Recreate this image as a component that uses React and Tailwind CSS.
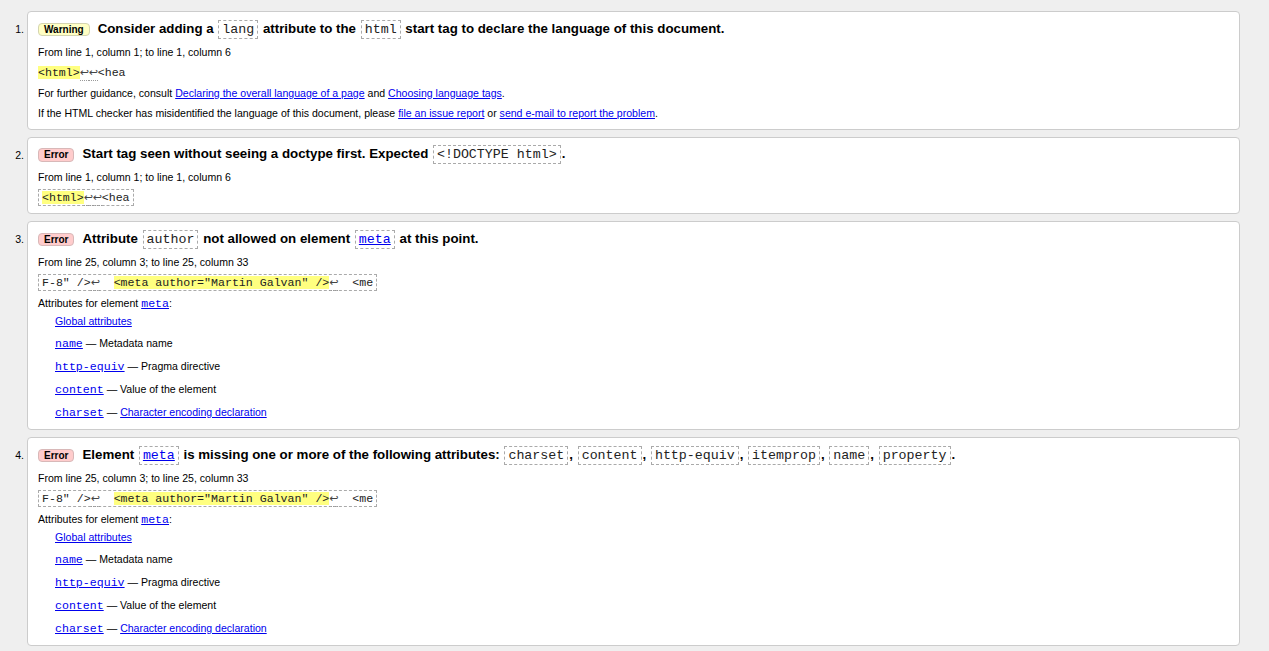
import React from "react";

function Badge({ kind }) {
  if (kind === "warning") {
    return (
      <span className="inline-block shrink-0 mr-[8px] mt-[1px] px-[5px] border border-[#d4d4b0] rounded-[4px] bg-[#ffffc4] text-[10px] font-bold leading-[11.5px] text-black">
        Warning
      </span>
    );
  }
  return (
    <span className="inline-block shrink-0 mr-[8px] mt-[1px] px-[5px] border border-[#d8b8b8] rounded-[4px] bg-[#ffcccc] text-[10px] font-bold leading-[11.5px] text-black">
      Error
    </span>
  );
}

function TC({ children }) {
  return (
    <code className="font-['Liberation_Mono',monospace] text-[13.3px] font-normal text-[#222] border border-dashed border-[#aaa] px-[3px] py-[1px] mx-[1px]">
      {children}
    </code>
  );
}

function L({ children, mono }) {
  return (
    <a className={mono ? "text-[#0000ee] underline font-['Liberation_Mono',monospace] text-[11.6px]" : "text-[#0000ee] underline"}>
      {children}
    </a>
  );
}

function Arrow() {
  return (
    <span className="inline-block w-[9px] pb-[2px] text-center border-b border-dotted border-[#999] leading-[10px] font-['DejaVu_Sans',sans-serif] text-[11px] text-[#444]">
      ↩
    </span>
  );
}

function Hl({ children }) {
  return <span className="bg-[#ffff80]">{children}</span>;
}

function Title({ kind, children }) {
  return (
    <div className="flex items-center h-[20px] mt-[1px]">
      <Badge kind={kind} />
      <span className="text-[13.3px] font-bold leading-[20px] text-black whitespace-nowrap">{children}</span>
    </div>
  );
}

function Line({ children, first }) {
  return (
    <div className={first ? "mt-[2.5px] text-[10.55px] leading-[20.5px] whitespace-nowrap" : "text-[10.55px] leading-[20.5px] whitespace-nowrap"}>
      {children}
    </div>
  );
}

function CodeBox({ children, boxed }) {
  return (
    <div className="h-[20.5px] flex items-center">
      <div
        className={
          boxed
            ? "flex items-center h-[17px] whitespace-pre font-['Liberation_Mono',monospace] text-[11.6px] text-[#222] leading-[13px] px-[3px] border border-dashed border-[#aaa]"
            : "flex items-center h-[17px] whitespace-pre font-['Liberation_Mono',monospace] text-[11.6px] text-[#222] leading-[13px] border border-transparent -ml-px"
        }
      >
        <span className="mt-[2px]">{children}</span>
      </div>
    </div>
  );
}

function HtmlCode() {
  return (
    <>
      <Hl>{"<html>"}</Hl>
      <Arrow />
      <Arrow />
      {"<hea"}
    </>
  );
}

function MetaCode() {
  return (
    <>
      {'F-8" />'}
      <Arrow />
      {"  "}
      <Hl>{'<meta author="Martin Galvan" />'}</Hl>
      <Arrow />
      {"  <me"}
    </>
  );
}

function AttrList() {
  return (
    <>
      <div className="mt-[3.5px] text-[10.55px] leading-[15px]">
        Attributes for element <L mono>meta</L>:
      </div>
      <div className="pl-[17px] text-[10.55px] leading-[21px]">
        <L>Global attributes</L>
      </div>
      <div className="pl-[17px] text-[10.55px] leading-[23px]">
        <L mono>name</L> — Metadata name
      </div>
      <div className="pl-[17px] text-[10.55px] leading-[23px]">
        <L mono>http-equiv</L> — Pragma directive
      </div>
      <div className="pl-[17px] text-[10.55px] leading-[23px]">
        <L mono>content</L> — Value of the element
      </div>
      <div className="pl-[17px] text-[10.55px] leading-[23px]">
        <L mono>charset</L> — <L>Character encoding declaration</L>
      </div>
    </>
  );
}

function Item({ n, children }) {
  return (
    <div className="flex">
      <div className="w-[27px] shrink-0 pr-[3px] text-right pt-[8px] leading-[20px] text-[10.55px]">{n}.</div>
      <div className="flex-1 bg-white border border-[#cccccc] rounded-[4px] pt-[6px] pb-[5px] pl-[10px]">{children}</div>
    </div>
  );
}

export default function App() {
  return (
    <div className="min-h-screen bg-[#efefef] pt-[11px] pb-[6px] pr-[29px] flex flex-col gap-[7px] font-['Liberation_Sans',Arial,sans-serif] text-black">
      <Item n={1}>
        <Title kind="warning">
          Consider adding a <TC>lang</TC> attribute to the <TC>html</TC> start tag to declare the language of this document.
        </Title>
        <Line first>From line 1, column 1; to line 1, column 6</Line>
        <CodeBox>
          <HtmlCode />
        </CodeBox>
        <Line>
          For further guidance, consult <L>Declaring the overall language of a page</L> and <L>Choosing language tags</L>.
        </Line>
        <Line>
          If the HTML checker has misidentified the language of this document, please <L>file an issue report</L> or{" "}
          <L>send e-mail to report the problem</L>.
        </Line>
      </Item>

      <Item n={2}>
        <Title kind="error">
          Start tag seen without seeing a doctype first. Expected <TC>{"<!DOCTYPE html>"}</TC>.
        </Title>
        <Line first>From line 1, column 1; to line 1, column 6</Line>
        <CodeBox boxed>
          <HtmlCode />
        </CodeBox>
      </Item>

      <Item n={3}>
        <Title kind="error">
          Attribute <TC>author</TC> not allowed on element{" "}
          <TC>
            <span className="text-[#0000ee] underline">meta</span>
          </TC>{" "}
          at this point.
        </Title>
        <Line first>From line 25, column 3; to line 25, column 33</Line>
        <CodeBox boxed>
          <MetaCode />
        </CodeBox>
        <AttrList />
      </Item>

      <Item n={4}>
        <Title kind="error">
          Element{" "}
          <TC>
            <span className="text-[#0000ee] underline">meta</span>
          </TC>{" "}
          is missing one or more of the following attributes: <TC>charset</TC>, <TC>content</TC>, <TC>http-equiv</TC>,{" "}
          <TC>itemprop</TC>, <TC>name</TC>, <TC>property</TC>.
        </Title>
        <Line first>From line 25, column 3; to line 25, column 33</Line>
        <CodeBox boxed>
          <MetaCode />
        </CodeBox>
        <AttrList />
      </Item>
    </div>
  );
}
